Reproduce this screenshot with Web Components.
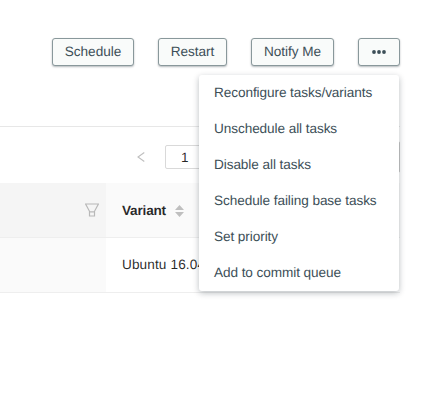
<!DOCTYPE html>
<html lang="en"><head><meta charset="utf-8"><title>Patch tasks</title>
<style>body{margin:0;background:#fff;font-family:"Liberation Sans",Arial,sans-serif;font-size:13.6px;color:rgba(0,0,0,.85);text-rendering:geometricPrecision}</style></head>
<body><patch-page></patch-page>
<script>
const define=(name,html)=>customElements.define(name,class extends HTMLElement{
  constructor(){super();const t=document.createElement('template');t.innerHTML=html;this.attachShadow({mode:'open'}).append(t.content.cloneNode(true));}
});
define('action-button',`<style>
:host{display:flex;box-sizing:border-box;height:28px;align-items:center;justify-content:center;border:1px solid #89989b;border-radius:3px;background:#f9fbfa;color:#3d4f58;box-shadow:0 1px 2px rgba(6,22,33,.3);line-height:20px;white-space:nowrap;padding-bottom:1px;letter-spacing:-.03px}
</style><slot></slot>`);
define('menu-item',`<style>
:host{display:flex;box-sizing:border-box;height:36px;align-items:center;padding:0 0 0 15px;color:#3d4f58;white-space:nowrap;line-height:16px;letter-spacing:-.08px}
</style><slot></slot>`);
define('action-menu',`<style>
:host{display:block;box-sizing:border-box;position:absolute;left:199px;top:75px;width:200px;height:216px;background:#fff;border-radius:3px;box-shadow:0 2px 6px rgba(6,22,33,.28)}
</style><slot></slot>`);
define('page-bar',`<style>
:host{display:flex;box-sizing:border-box;height:57px;width:400px;border-top:1px solid #e7e7e7;padding:18px 0 0 136px}
svg{display:block;margin-top:7px}
.num{box-sizing:border-box;margin-left:19px;width:50px;height:24px;border:1px solid #d9d9d9;border-radius:2px;line-height:23px;padding-left:15px}
.size{box-sizing:border-box;margin-left:auto;height:32px;width:100px;margin-top:-4px;border:1px solid #c9c9c9;border-radius:2px}
</style><svg width="10" height="10" viewBox="0 0 10 10"><path d="M8.3 .5 2 5l6.3 4.5" fill="none" stroke="#bfbfbf" stroke-width="1.1"/></svg><div class="num">1</div><div class="size"></div>`);
define('filter-icon',`<style>:host,svg{display:block}</style><svg width="14" height="14" viewBox="0 0 14 14" fill="none" stroke="#b8b8b8" stroke-width="1.2"><path d="M.6 1H13.4L9.5 8.3V13H4.5V8.3ZM4.5 8.8H9.5"/></svg>`);
define('sort-icon',`<style>:host,svg{display:block}</style><svg width="9" height="12" viewBox="0 0 9 12" fill="#bfbfbf"><path d="M4.5 0 9 5H0ZM4.5 12 9 7H0Z"/></svg>`);
define('task-table',`<style>
:host{display:grid;width:400px;grid-template-columns:106px 294px;grid-template-rows:55px 55px}
div{box-sizing:border-box;display:flex;align-items:center;border-bottom:1px solid #eee;background:#fafafa;line-height:16px}
.sorted{background:#f5f5f5;justify-content:flex-end;padding-right:7px}
.name{padding-left:16px;font-weight:700;gap:9px}
.name span{letter-spacing:-.2px;padding-top:2px}
sort-icon{padding-top:1px}
.value{background:#fff;padding-left:16px;letter-spacing:.12px}
</style><div class="sorted"><filter-icon></filter-icon></div><div class="name"><span>Variant</span><sort-icon></sort-icon></div><div></div><div class="value">Ubuntu 16.04</div>`);
define('patch-page',`<style>
:host{display:block;position:relative;width:428px;height:400px;overflow:hidden}
nav{display:flex;justify-content:flex-end;gap:24px;padding:38px 28px 60px 0}
svg{display:block}
</style><nav><action-button style="width:82px">Schedule</action-button><action-button style="width:69px">Restart</action-button><action-button style="width:83px">Notify Me</action-button><action-button style="width:42px"><svg width="14" height="4" viewBox="0 0 14 4" fill="#3d4f58"><circle cx="2" cy="2" r="1.9"/><circle cx="7" cy="2" r="1.9"/><circle cx="12" cy="2" r="1.9"/></svg></action-button></nav>
<page-bar></page-bar><task-table></task-table>
<action-menu><menu-item>Reconfigure tasks/variants</menu-item><menu-item>Unschedule all tasks</menu-item><menu-item>Disable all tasks</menu-item><menu-item>Schedule failing base tasks</menu-item><menu-item>Set priority</menu-item><menu-item>Add to commit queue</menu-item></action-menu>`);
</script></body></html>
